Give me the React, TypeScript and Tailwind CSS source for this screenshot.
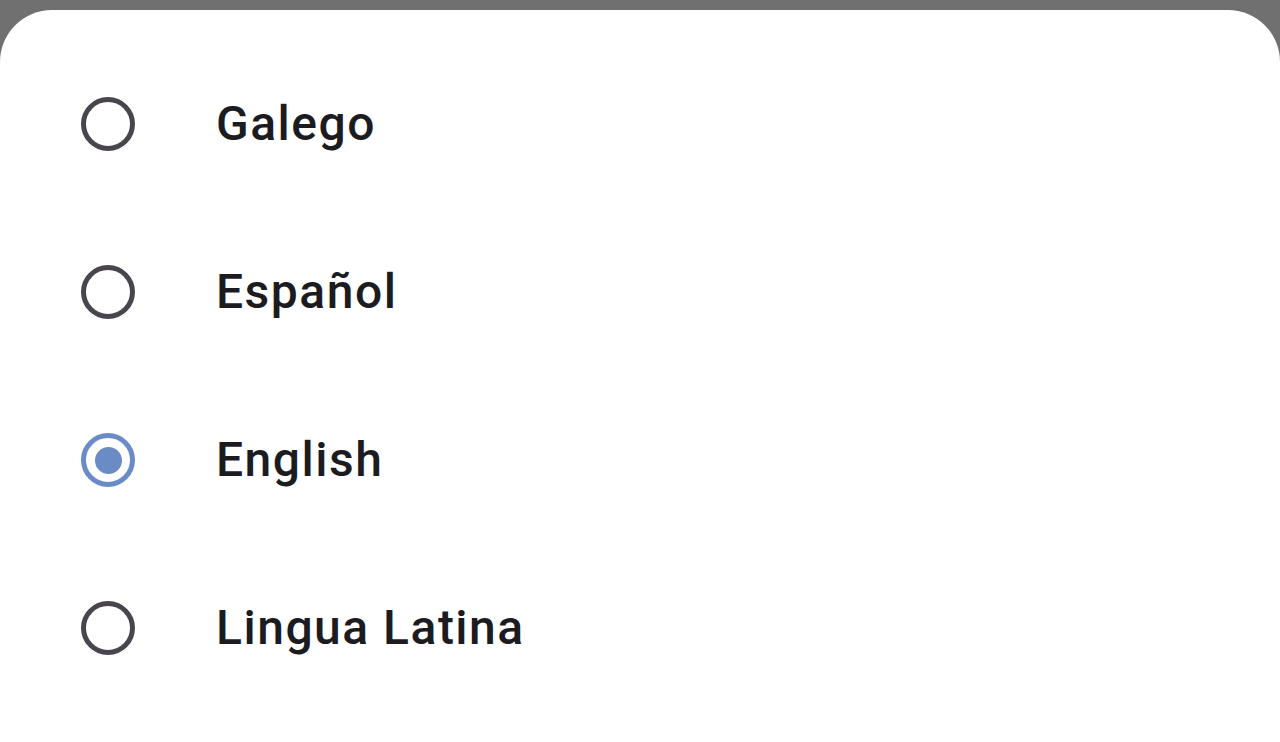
import { useState } from 'react';

const languages = ['Galego', 'Español', 'English', 'Lingua Latina'];

function Radio({ checked }: { checked: boolean }) {
  return (
    <div
      className={`flex h-[54px] w-[54px] shrink-0 items-center justify-center rounded-full border-[5px] ${
        checked ? 'border-[#6a8bc6]' : 'border-[#48454e]'
      }`}
    >
      {checked && <div className="h-[27px] w-[27px] rounded-full bg-[#6a8bc6]" />}
    </div>
  );
}

export default function App() {
  const [selected, setSelected] = useState('English');

  return (
    <div className="h-[742px] w-full overflow-hidden bg-[#707070] pt-[10px]">
      <div className="h-full rounded-t-[52px] bg-white pt-[30px] font-['Roboto',sans-serif]">
        {languages.map((lang) => (
          <button
            key={lang}
            onClick={() => setSelected(lang)}
            className="flex h-[168px] w-full items-center pl-[81px] text-left"
          >
            <Radio checked={selected === lang} />
            <span className="ml-[81px] text-[48px] font-medium tracking-[1.5px] text-[#1c1b1f]">{lang}</span>
          </button>
        ))}
      </div>
    </div>
  );
}
